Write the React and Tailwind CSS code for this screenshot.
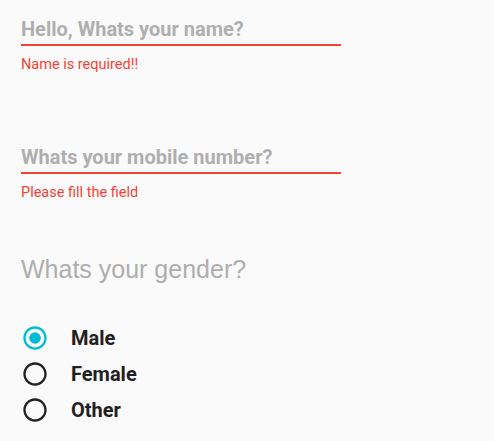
import React, { useState } from 'react';

const fields = [
  { id: 'name', placeholder: 'Hello, Whats your name?', error: 'Name is required!!' },
  { id: 'mobile', placeholder: 'Whats your mobile number?', error: 'Please fill the field' },
];

const genders = ['Male', 'Female', 'Other'];

// Material style radio icon (24 box)
const RadioIcon = ({ checked }) => (
  <svg viewBox="0 0 24 24" className={`w-[28px] h-[28px] shrink-0 ${checked ? 'text-[#00bcd4]' : 'text-[#212121]'}`} fill="currentColor">
    {checked && <circle cx="12" cy="12" r="5" />}
    <path d="M12 2C6.48 2 2 6.48 2 12s4.48 10 10 10 10-4.48 10-10S17.52 2 12 2zm0 18c-4.42 0-8-3.58-8-8s3.58-8 8-8 8 3.58 8 8-3.58 8-8 8z" />
  </svg>
);

const App = () => {
  const [gender, setGender] = useState('Male');

  return (
    <div className="min-h-[441px] w-[494px] bg-[#fafafa] pl-[21px] font-['Roboto',sans-serif]">
      {fields.map((f) => (
        <div key={f.id} className="h-[128px] pt-[17px]">
          <input
            id={f.id}
            placeholder={f.placeholder}
            className="block w-[320px] h-[29px] pb-[4px] bg-transparent border-b-2 border-[#f44336] outline-none text-[20px] font-bold text-[#212121] placeholder:text-[#afafaf]"
          />
          <p className="mt-[9px] text-[14.5px] leading-5 text-[#f44336]">{f.error}</p>
        </div>
      ))}

      <p className="-mt-[1px] text-[25px] leading-[28px] text-[#aeaeae] font-['Liberation_Sans',Arial,sans-serif]">
        Whats your gender?
      </p>

      <div className="mt-[37px] flex flex-col">
        {genders.map((g) => (
          <label key={g} className="flex items-center h-[36px] cursor-pointer" onClick={() => setGender(g)}>
            <RadioIcon checked={gender === g} />
            <span className="ml-[22px] text-[20px] font-bold text-[#212121]">{g}</span>
          </label>
        ))}
      </div>
    </div>
  );
};

export default App;
